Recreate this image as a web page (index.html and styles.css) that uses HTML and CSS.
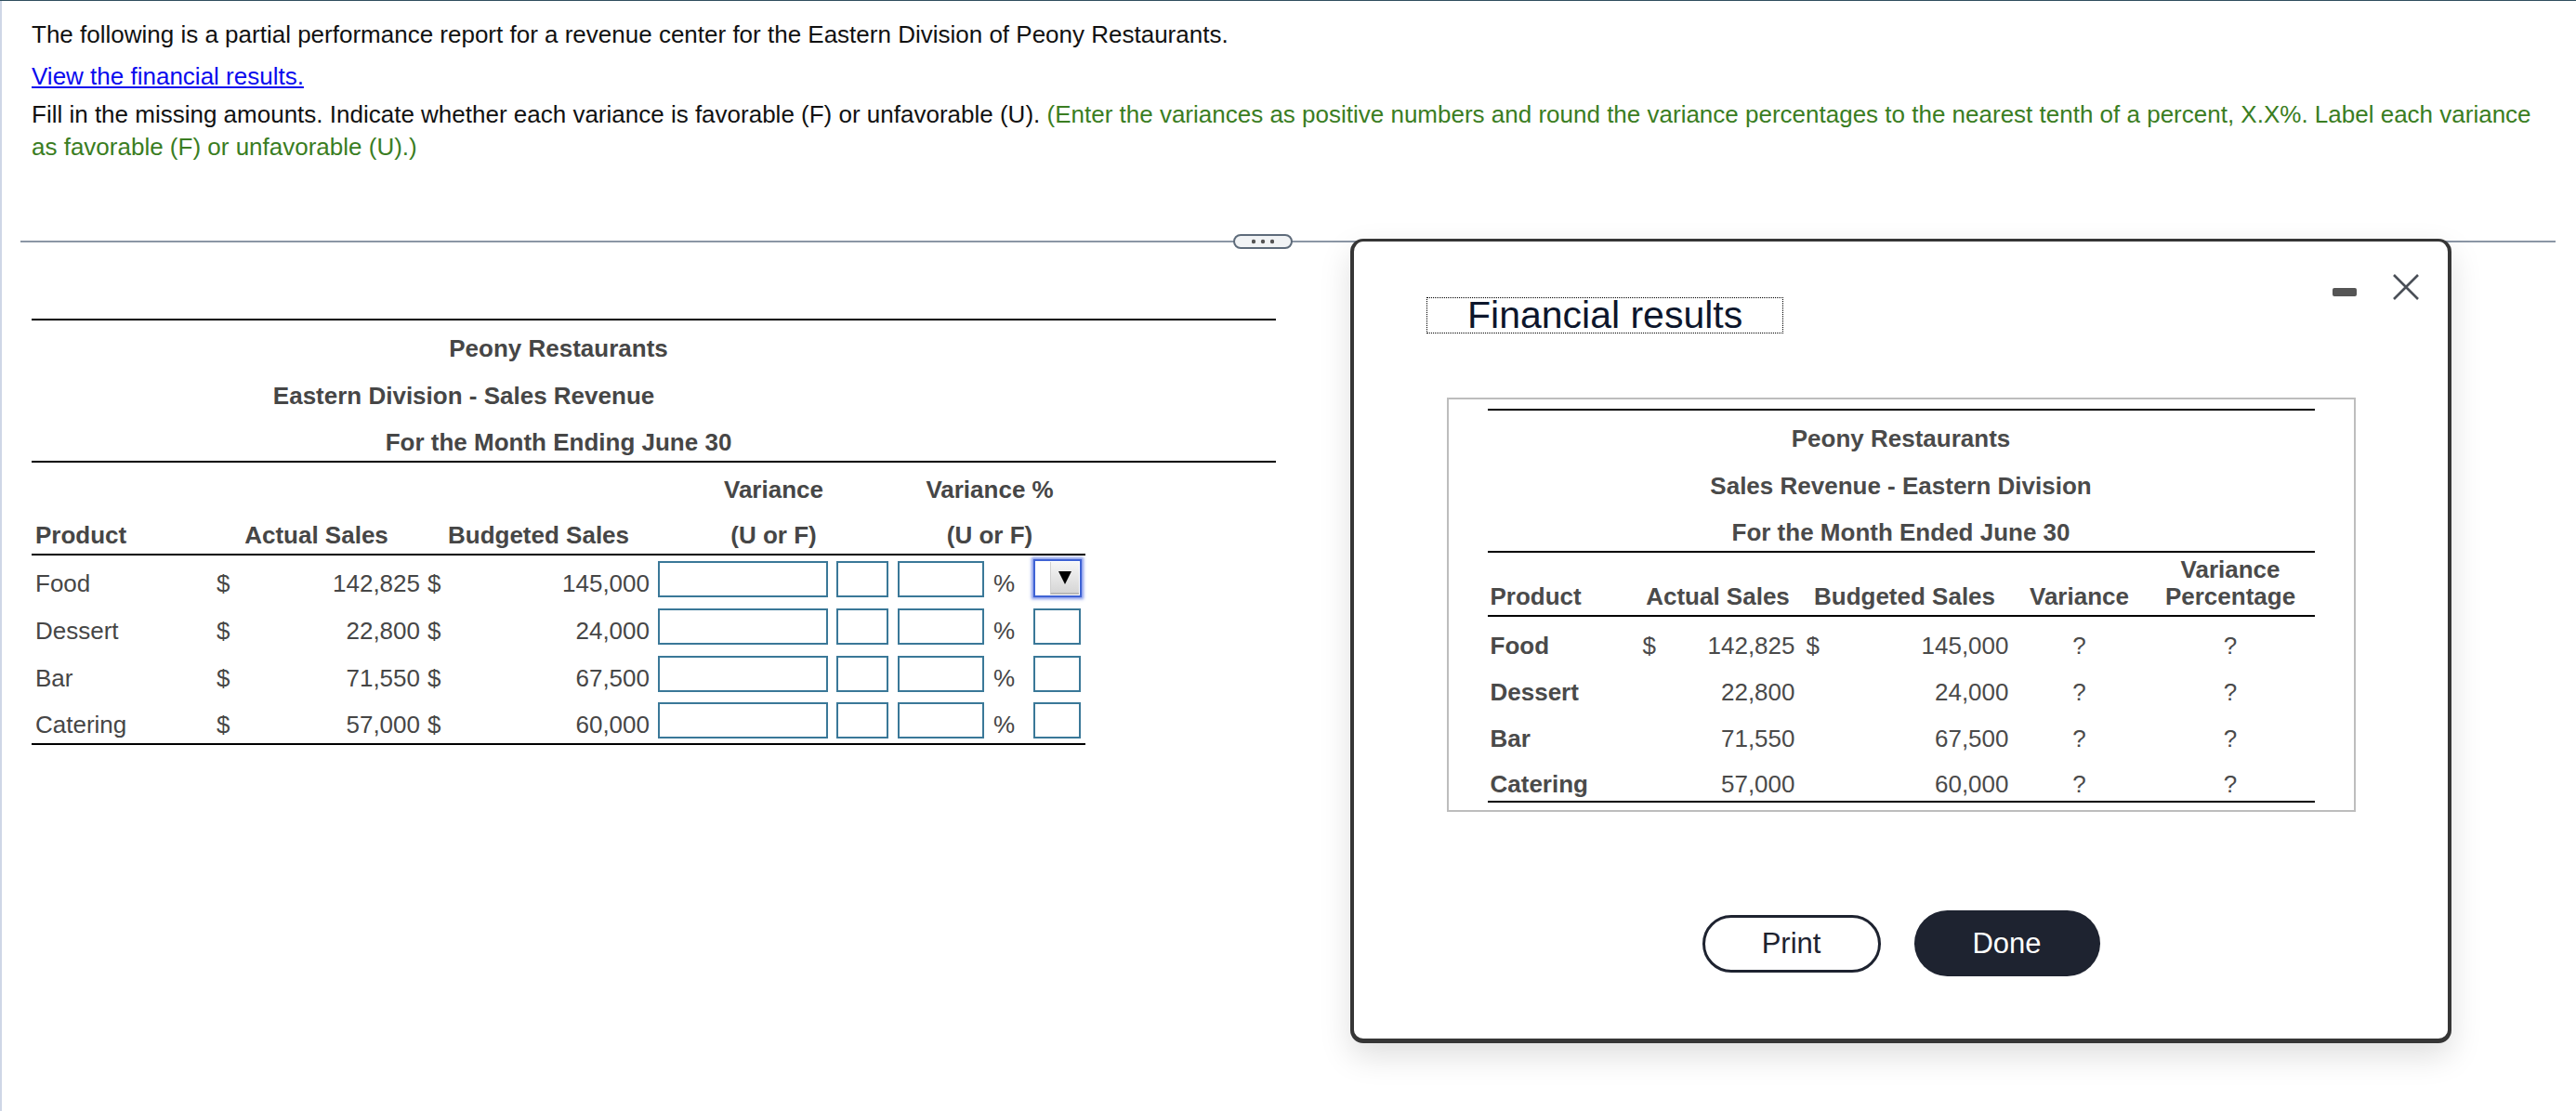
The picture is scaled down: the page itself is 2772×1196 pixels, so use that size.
FILE: index.html
```html
<!DOCTYPE html>
<html lang="en">
<head>
    <meta charset="UTF-8">
    <title>Peony Restaurants - Revenue Center Performance Report</title>
    <link rel="stylesheet" href="styles.css">
</head>
<body>

    <div class="page">
        <p class="intro">The following is a partial performance report for a revenue center for the Eastern Division of Peony Restaurants.</p>
        <p class="link-line"><a href="#">View the financial results.</a></p>
        <p class="task">Fill in the missing amounts. Indicate whether each variance is favorable (F) or unfavorable (U). <span class="hint">(Enter the variances as positive numbers and round the variance percentages to the nearest tenth of a percent, X.X%. Label each variance as favorable (F) or unfavorable (U).)</span></p>

        <div class="divider">
            <span class="more">
                <svg width="24" height="6" viewBox="0 0 24 6"><circle cx="2" cy="3" r="2.2"/><circle cx="12" cy="3" r="2.2"/><circle cx="22" cy="3" r="2.2"/></svg>
            </span>
        </div>

        <table class="report">
            <colgroup>
                <col class="c-product"><col class="c-cur1"><col class="c-actual"><col class="c-cur2"><col class="c-budget">
                <col class="c-var"><col class="c-uf"><col class="c-pct"><col class="c-sign"><col class="c-pick"><col class="c-fill">
            </colgroup>
            <tr class="title rule-top">
                <td colspan="10">Peony Restaurants</td><td></td>
            </tr>
            <tr class="title">
                <td colspan="10" class="shift">Eastern Division - Sales Revenue</td><td></td>
            </tr>
            <tr class="title rule-bottom">
                <td colspan="10">For the Month Ending June 30</td><td></td>
            </tr>
            <tr class="head">
                <td></td><td colspan="2"></td><td colspan="2"></td>
                <th colspan="2">Variance</th><th colspan="3">Variance %</th><td></td>
            </tr>
            <tr class="head cols">
                <th class="left">Product</th><th colspan="2">Actual Sales</th><th colspan="2">Budgeted Sales</th>
                <th colspan="2">(U or F)</th><th colspan="3">(U or F)</th><td class="filler"></td>
            </tr>
            <tr class="row">
                <td class="name">Food</td><td class="cur">$</td><td class="num">142,825</td><td class="cur after">$</td><td class="num">145,000</td>
                <td class="inp"><input class="field wide" type="text"></td>
                <td class="inp uf"><input class="field small" type="text"></td>
                <td class="inp pc"><input class="field mid" type="text"></td>
                <td class="sign">%</td>
                <td class="inp pk">
                    <span class="pick">
                        <span class="pick-blank"></span>
                        <span class="pick-btn"><svg width="14" height="14" viewBox="0 0 14 14"><polygon points="0,0 14,0 7,14"/></svg></span>
                    </span>
                </td>
                <td class="filler"></td>
            </tr>
            <tr class="row">
                <td class="name">Dessert</td><td class="cur">$</td><td class="num">22,800</td><td class="cur after">$</td><td class="num">24,000</td>
                <td class="inp"><input class="field wide" type="text"></td>
                <td class="inp uf"><input class="field small" type="text"></td>
                <td class="inp pc"><input class="field mid" type="text"></td>
                <td class="sign">%</td>
                <td class="inp pk"><input class="field tiny" type="text"></td>
                <td class="filler"></td>
            </tr>
            <tr class="row">
                <td class="name">Bar</td><td class="cur">$</td><td class="num">71,550</td><td class="cur after">$</td><td class="num">67,500</td>
                <td class="inp"><input class="field wide" type="text"></td>
                <td class="inp uf"><input class="field small" type="text"></td>
                <td class="inp pc"><input class="field mid" type="text"></td>
                <td class="sign">%</td>
                <td class="inp pk"><input class="field tiny" type="text"></td>
                <td class="filler"></td>
            </tr>
            <tr class="row last">
                <td class="name">Catering</td><td class="cur">$</td><td class="num">57,000</td><td class="cur after">$</td><td class="num">60,000</td>
                <td class="inp"><input class="field wide" type="text"></td>
                <td class="inp uf"><input class="field small" type="text"></td>
                <td class="inp pc"><input class="field mid" type="text"></td>
                <td class="sign">%</td>
                <td class="inp pk"><input class="field tiny" type="text"></td>
                <td class="filler"></td>
            </tr>
        </table>
    </div>

    <!-- Financial results popup -->
    <div class="modal">
        <div class="modal-head">
            <h2 class="modal-title">Financial results</h2>
            <div class="modal-tools">
                <svg class="minimize" width="26" height="9" viewBox="0 0 26 9"><rect width="26" height="9" rx="2"/></svg>
                <svg class="close" width="30" height="28" viewBox="0 0 30 28"><path d="M2 1 L28 27 M28 1 L2 27"/></svg>
            </div>
        </div>

        <div class="sheet">
            <table class="results">
                <colgroup>
                    <col class="r-product"><col class="r-cur1"><col class="r-actual"><col class="r-cur2">
                    <col class="r-budget"><col class="r-var"><col class="r-pct">
                </colgroup>
                <tr class="title rule-top"><td colspan="7">Peony Restaurants</td></tr>
                <tr class="title"><td colspan="7">Sales Revenue - Eastern Division</td></tr>
                <tr class="title rule-bottom"><td colspan="7">For the Month Ended June 30</td></tr>
                <tr class="head">
                    <th class="left">Product</th><th colspan="2">Actual Sales</th><th colspan="2">Budgeted Sales</th>
                    <th>Variance</th><th>Variance<br>Percentage</th>
                </tr>
                <tr class="row">
                    <td class="name">Food</td><td class="cur">$</td><td class="num">142,825</td><td class="cur after">$</td>
                    <td class="num wide">145,000</td><td class="q">?</td><td class="q">?</td>
                </tr>
                <tr class="row">
                    <td class="name">Dessert</td><td></td><td class="num">22,800</td><td></td>
                    <td class="num wide">24,000</td><td class="q">?</td><td class="q">?</td>
                </tr>
                <tr class="row">
                    <td class="name">Bar</td><td></td><td class="num">71,550</td><td></td>
                    <td class="num wide">67,500</td><td class="q">?</td><td class="q">?</td>
                </tr>
                <tr class="row last">
                    <td class="name">Catering</td><td></td><td class="num">57,000</td><td></td>
                    <td class="num wide">60,000</td><td class="q">?</td><td class="q">?</td>
                </tr>
            </table>
        </div>

        <div class="actions">
            <button class="btn btn-print" type="button">Print</button>
            <button class="btn btn-done" type="button">Done</button>
        </div>
    </div>

</body>
</html>
```

FILE: styles.css
```css
html, body {
    margin: 0;
    height: 100%;
    overflow: hidden;
}

body {
    font-family: "Liberation Sans", Arial, Helvetica, sans-serif;
    font-size: 26px;
    color: #111;
    background-color: #fff;
    border-top: 1px solid #2f4e5e;
    box-sizing: border-box;
}

.page {
    min-height: 100%;
    box-sizing: border-box;
    border-left: 2px solid #cfd6e6;
    padding: 19px 22px 0 32px;
}

/* intro text */
.intro, .link-line, .task {
    margin: 0;
    line-height: 35px;
}

.intro {
    margin-bottom: 10px;
}

.link-line {
    margin-bottom: 6px;
}

.link-line a {
    color: #0a0aee;
    text-decoration: underline;
}

.hint {
    color: #3a7d22;
}

/* divider with the "more" pill */
.divider {
    position: relative;
    margin: 83px 0 0 -12px;
    border-top: 2px solid #8b96a5;
}

.more {
    position: absolute;
    left: 1305px;
    top: -9px;
    width: 64px;
    height: 16px;
    box-sizing: border-box;
    border: 2px solid #5e6b7a;
    border-radius: 9px;
    background-color: #f1f3f5;
    display: flex;
    align-items: center;
    justify-content: center;
}

.more svg {
    fill: #555;
}

/* left report table */
.report {
    margin-top: 82px;
    border-collapse: collapse;
    table-layout: fixed;
    width: 1339px;
    color: #464646;
}

.c-product { width: 191px; }
.c-cur1    { width: 25px; }
.c-actual  { width: 206px; }
.c-cur2    { width: 22px; }
.c-budget  { width: 225px; }
.c-var     { width: 194px; }
.c-uf      { width: 65px; }
.c-pct     { width: 101px; }
.c-sign    { width: 37px; }
.c-pick    { width: 68px; }
.c-fill    { width: 205px; }

.report tr {
    height: 50px;
}

.report tr.title {
    height: 51px;
}

.report tr.row {
    height: 51px;
}

.report td, .report th {
    padding: 0 0 5px;
    vertical-align: bottom;
    line-height: 30px;
    white-space: nowrap;
    font-weight: normal;
}

.report th {
    font-weight: bold;
    text-align: center;
}

.report th.left {
    text-align: left;
    padding-left: 4px;
}

.report .title td {
    font-weight: bold;
    text-align: center;
}

.report .title td.shift {
    padding-right: 204px;
}

.report .rule-top > td {
    border-top: 2px solid #000;
}

.report .rule-bottom > td {
    border-bottom: 2px solid #000;
}

.report .cols > th {
    border-bottom: 2px solid #000;
}

.report .last > td:not(.filler) {
    border-bottom: 2px solid #000;
}

.report .name { padding-left: 4px; }
.report .cur { padding-left: 8px; }
.report .cur.after { padding-left: 4px; }
.report .num { text-align: right; padding-right: 4px; }
.report .inp { padding-left: 5px; }
.report .inp.uf { padding-left: 3px; }
.report .inp.pc { padding-left: 4px; }
.report .inp.pk { padding-left: 12px; }
.report .sign { padding-left: 6px; }

.field {
    display: block;
    box-sizing: border-box;
    height: 39px;
    margin: 0;
    padding: 0;
    border: 2px solid #3a7898;
    border-radius: 0;
    background-color: #fff;
    outline: none;
}

.field.wide  { width: 183px; }
.field.small { width: 56px; }
.field.mid   { width: 93px; }
.field.tiny  { width: 51px; }

/* focused dropdown */
.pick {
    display: flex;
    box-sizing: border-box;
    width: 52px;
    height: 41px;
    border: 2px solid #3f63d4;
    box-shadow: 0 0 3px 2px rgba(75, 105, 225, 0.7);
    background-color: #fff;
}

.pick-blank {
    flex: 1;
}

.pick-btn {
    width: 30px;
    margin: 1px 1px 1px 0;
    display: flex;
    align-items: center;
    justify-content: center;
    background: linear-gradient(#f6f6f6, #d6d6d6);
    border-left: 1px solid #d0d0d0;
    border-bottom: 2px solid #b8b8b8;
}

.pick-btn svg {
    fill: #000;
}

/* popup window */
.modal {
    position: absolute;
    left: 1453px;
    top: 257px;
    width: 1185px;
    height: 866px;
    box-sizing: border-box;
    border: 4px solid #363636;
    border-top-width: 3px;
    border-bottom-width: 5px;
    border-radius: 14px;
    background-color: #fff;
    box-shadow: 0 14px 34px rgba(0, 0, 0, 0.13);
    display: flex;
    flex-direction: column;
}

.modal-head {
    display: flex;
    justify-content: space-between;
    align-items: flex-start;
    padding: 35px 30px 0 78px;
}

.modal-title {
    margin: 25px 0 0;
    padding: 0 43px;
    font-size: 41px;
    line-height: 37px;
    font-weight: normal;
    color: #0d162c;
    border: 1px dotted #000;
}

.modal-tools {
    display: flex;
    align-items: flex-start;
    gap: 38px;
}

.minimize {
    margin-top: 15px;
    fill: #555;
}

.close {
    fill: none;
    stroke: #4a4f57;
    stroke-width: 2.6;
}

.sheet {
    box-sizing: border-box;
    width: 978px;
    margin: 69px auto 0;
    padding: 10px 42px 8px;
    border: 2px solid #bdbdbd;
}

.results {
    width: 890px;
    border-collapse: collapse;
    table-layout: fixed;
    color: #4a4a4a;
}

.r-product { width: 163px; }
.r-cur1    { width: 20px; }
.r-actual  { width: 150px; }
.r-cur2    { width: 30px; }
.r-budget  { width: 202px; }
.r-var     { width: 144px; }
.r-pct     { width: 181px; }

.results tr {
    height: 50px;
}

.results tr.title {
    height: 51px;
}

.results td, .results th {
    padding: 0 0 5px;
    vertical-align: bottom;
    line-height: 30px;
    white-space: nowrap;
}

.results .title td {
    font-weight: bold;
    text-align: center;
}

.results .rule-top > td {
    border-top: 2px solid #000;
}

.results .rule-bottom > td {
    border-bottom: 2px solid #000;
}

.results tr.head {
    height: 69px;
}

.results .head th {
    line-height: 29px;
    text-align: center;
    border-bottom: 2px solid #000;
}

.results .head th.left {
    text-align: left;
    padding-left: 3px;
}

.results .row td {
    padding-bottom: 3px;
}

.results .last > td {
    border-bottom: 2px solid #000;
}

.results .name { font-weight: bold; padding-left: 3px; }
.results .cur { padding-left: 4px; }
.results .cur.after { padding-left: 10px; }
.results .num { text-align: right; padding-right: 2px; }
.results .num.wide { padding-right: 4px; }
.results .q { text-align: center; }

/* buttons */
.actions {
    display: flex;
    justify-content: center;
    align-items: center;
    gap: 36px;
    margin-top: 106px;
}

.btn {
    font-family: "Liberation Sans", Arial, Helvetica, sans-serif;
    font-size: 31px;
    box-sizing: border-box;
    cursor: pointer;
    padding: 0;
}

.btn-print {
    width: 192px;
    height: 62px;
    border: 3px solid #1e2330;
    border-radius: 31px;
    background-color: #fff;
    color: #1e2330;
}

.btn-done {
    width: 200px;
    height: 71px;
    border: none;
    border-radius: 36px;
    background-color: #1e2330;
    color: #fff;
}
```
